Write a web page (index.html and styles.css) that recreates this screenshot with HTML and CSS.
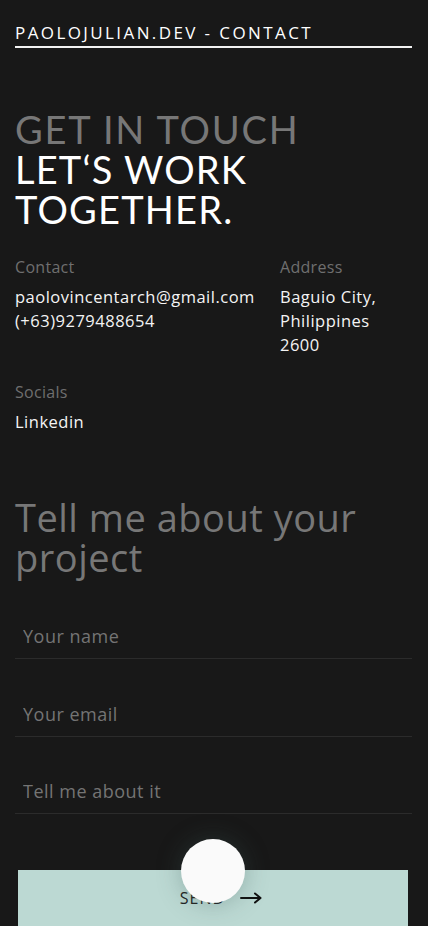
FILE: index.html
```html
<!DOCTYPE html>
<html lang="en">
<head>
<meta charset="utf-8">
<title>Contact</title>
<link rel="stylesheet" href="styles.css">
</head>
<body>
<div class="page">
  <header class="topbar">PAOLOJULIAN.DEV - CONTACT</header>
  <h1 class="headline">
    <span class="muted">GET IN TOUCH</span>
    <span>LET‘S WORK</span>
    <span>TOGETHER.</span>
  </h1>
  <section class="info">
    <div class="info-block">
      <div class="label">Contact</div>
      <div class="value">paolovincentarch@gmail.com<br>(+63)9279488654</div>
    </div>
    <div class="info-block">
      <div class="label">Address</div>
      <div class="value">Baguio City,<br>Philippines<br>2600</div>
    </div>
    <div class="info-block socials">
      <div class="label">Socials</div>
      <div class="value">Linkedin</div>
    </div>
  </section>
  <h2 class="form-title">Tell me about your project</h2>
  <form class="form">
    <input class="field" type="text" placeholder="Your name">
    <input class="field" type="email" placeholder="Your email">
    <input class="field" type="text" placeholder="Tell me about it">
    <button class="send" type="button">SEND
      <svg class="arrow" width="22" height="12" viewBox="0 0 22 12" aria-hidden="true">
        <path d="M1 6 H20 M15 1.5 L20.5 6 L15 10.5" fill="none" stroke="#111" stroke-width="2" stroke-linecap="round" stroke-linejoin="round"/>
      </svg>
    </button>
  </form>
</div>
<div class="cursor"></div>
</body>
</html>
```
FILE: styles.css
```css
html, body {
  margin: 0;
  padding: 0;
  background: #181818;
}
body {
  font-family: "Open Sans", "Liberation Sans", sans-serif;
  color: #ffffff;
  min-height: 926px;
  overflow: hidden;
}
.page {
  padding: 23px 16px 0 15px;
}
.topbar {
  font-size: 17px;
  line-height: 20px;
  letter-spacing: 2.4px;
  padding-bottom: 3px;
  border-bottom: 2px solid #f2f2f2;
}
.headline {
  margin: 61px 0 0;
  font-family: "Lato", "Noto Sans", sans-serif;
  font-weight: 400;
  font-size: 38px;
  line-height: 40px;
  letter-spacing: 1.2px;
  display: flex;
  flex-direction: column;
}
.muted {
  color: #777777;
  letter-spacing: 1.8px;
}
.info {
  margin-top: 26px;
  display: grid;
  grid-template-columns: 265px 1fr;
  row-gap: 23px;
}
.label {
  color: #6f6f6f;
  font-size: 16px;
  line-height: 24px;
  letter-spacing: 0.3px;
  margin-bottom: 6px;
}
.value {
  font-size: 16.5px;
  line-height: 24px;
  letter-spacing: 0.5px;
  color: #f4f4f4;
}
.form-title {
  margin: 63px 0 0;
  font-weight: 500;
  font-size: 38px;
  line-height: 40px;
  letter-spacing: 0.5px;
  color: #777777;
}
.form {
  margin-top: 37px;
  display: flex;
  flex-direction: column;
}
.field {
  height: 44px;
  margin: 0 0 32.5px;
  padding: 0 8px;
  background: transparent;
  border: none;
  border-bottom: 1px solid #2b2b2b;
  font-family: inherit;
  font-size: 18px;
  letter-spacing: 0.5px;
  color: #fff;
  outline: none;
}
.field::placeholder {
  color: #747474;
}
.field:last-of-type {
  margin-bottom: 56px;
}
.send {
  margin: 0 4px 0 3px;
  height: 58px;
  background: #bcd9d3;
  border: none;
  font-family: inherit;
  font-size: 16px;
  letter-spacing: 1px;
  color: #222;
  display: flex;
  align-items: center;
  justify-content: center;
  gap: 15px;
  padding: 0 0 2px 16px;
}
.arrow {
  display: block;
}
.cursor {
  position: absolute;
  left: 181px;
  top: 839px;
  width: 64px;
  height: 64px;
  border-radius: 50%;
  background: #fafafa;
  box-shadow: 0 0 24px rgba(60, 90, 85, 0.35);
}
```
